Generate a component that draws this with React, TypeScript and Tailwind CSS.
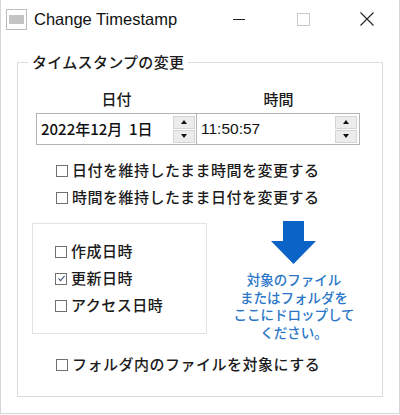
import type { ReactNode } from "react";

const jp = { fontFamily: '"Noto Sans CJK JP", "Noto Sans", sans-serif' };

function Box({ checked = false }: { checked?: boolean }) {
  return (
    <span className="mr-[4px] inline-flex h-[12px] w-[12px] shrink-0 items-center justify-center border border-[#707070] bg-white">
      {checked && (
        <svg width="9" height="9" viewBox="0 0 9 9">
          <path d="M1.5 4.5 L3.6 6.6 L7.6 1.8" fill="none" stroke="#4a5a7a" strokeWidth="1.1" />
        </svg>
      )}
    </span>
  );
}

function Check({ checked, children }: { checked?: boolean; children: ReactNode }) {
  return (
    <div className="flex h-[27px] items-center text-[15px] font-medium text-[#1a1a1a]">
      <Box checked={checked} />
      <span className="tracking-[0.5px]">{children}</span>
    </div>
  );
}

function Spinner() {
  return (
    <div className="flex flex-col gap-[1px]">
      <div className="flex h-[13px] w-[22px] items-center justify-center border border-[#d4d4d4] bg-[#ececec]">
        <svg width="6" height="4" viewBox="0 0 6 4">
          <path d="M0 4 L3 0 L6 4 Z" fill="#111" />
        </svg>
      </div>
      <div className="flex h-[13px] w-[22px] items-center justify-center border border-[#d4d4d4] bg-[#ececec]">
        <svg width="6" height="4" viewBox="0 0 6 4">
          <path d="M0 0 L3 4 L6 0 Z" fill="#111" />
        </svg>
      </div>
    </div>
  );
}

export default function App() {
  return (
    <div className="h-[415px] w-[400px] bg-white" style={jp}>
      <div className="flex h-[414px] w-[400px] flex-col border border-t-0 border-[#d6d6d6]">
        {/* title bar */}
        <div className="flex h-[38px] items-center pl-[5px]">
          <div className="flex h-[21px] w-[21px] items-center justify-center border border-[#bdbdbd] bg-white">
            <div className="h-[9px] w-[15px] bg-[#c4c4c4]" />
          </div>
          <span
            className="ml-[7px] text-[16.5px] text-[#111]"
            style={{ fontFamily: '"Liberation Sans", Arial, sans-serif' }}
          >
            Change Timestamp
          </span>
          <div className="ml-auto flex items-center">
            <div className="flex w-[64px] justify-center">
              <div className="h-[1px] w-[12px] bg-[#222]" />
            </div>
            <div className="flex w-[64px] justify-center">
              <div className="h-[13px] w-[13px] border border-[#c8c8c8]" />
            </div>
            <div className="flex w-[64px] justify-center">
              <svg width="14" height="14" viewBox="0 0 14 14">
                <path d="M0.5 0.5 L13.5 13.5 M13.5 0.5 L0.5 13.5" stroke="#222" strokeWidth="1.1" />
              </svg>
            </div>
          </div>
        </div>

        {/* group box */}
        <fieldset className="mx-[16px] mt-[13px] h-[346px] border border-[#dcdcdc] px-[18px] pt-[14px]">
          <legend className="ml-[-8px] px-[4px] text-[15px] font-medium tracking-[0.3px] text-[#1a1a1a]">
            タイムスタンプの変更
          </legend>

          <div className="flex text-[15px] font-medium text-[#1a1a1a]">
            <div className="w-[161px] text-center">日付</div>
            <div className="w-[163px] text-center">時間</div>
          </div>

          <div className="mt-[3px] flex">
            <div className="flex h-[32px] w-[161px] items-center justify-between border border-[#b4b4b4] pl-[4px] pr-[1px]">
              <span className="text-[15px] font-medium text-[#111]">2022年12月&nbsp;&nbsp;1日</span>
              <Spinner />
            </div>
            <div className="flex h-[32px] w-[163px] items-center justify-between border border-l-0 border-[#b4b4b4] pl-[4px] pr-[2px]">
              <span
                className="text-[15.5px] text-[#111]"
                style={{ fontFamily: '"Liberation Sans", Arial, sans-serif' }}
              >
                11:50:57
              </span>
              <Spinner />
            </div>
          </div>

          <div className="ml-[20px] mt-[12px] flex flex-col">
            <Check>日付を維持したまま時間を変更する</Check>
            <Check>時間を維持したまま日付を変更する</Check>
          </div>

          <div className="mt-[12px] flex">
            <div className="ml-[-4px] flex h-[111px] w-[175px] flex-col justify-center border border-[#e2e2e2] pl-[22px]">
              <Check>作成日時</Check>
              <Check checked>更新日時</Check>
              <Check>アクセス日時</Check>
            </div>
            <div className="ml-[22px] flex w-[130px] flex-col items-center">
              <svg width="46" height="44" viewBox="0 0 46 44" className="mt-[-2px]">
                <path d="M12 0 H33 V20 H45 L22.5 43 L0 20 H12 Z" fill="#0b63c8" />
              </svg>
              <div className="mt-[6px] flex flex-col gap-[1px] text-center text-[13.5px] font-medium leading-[16.5px] text-[#2b76c6]">
                <div>対象のファイル</div>
                <div>またはフォルダを</div>
                <div>ここにドロップして</div>
                <div>ください。</div>
              </div>
            </div>
          </div>

          <div className="ml-[20px] mt-[11px]">
            <Check>フォルダ内のファイルを対象にする</Check>
          </div>
        </fieldset>
      </div>
    </div>
  );
}
